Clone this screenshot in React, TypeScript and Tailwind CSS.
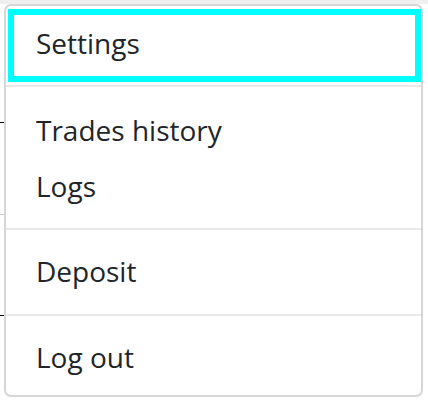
import React from "react";

const sections = [
  { items: ["Trades history", "Logs"], pad: "pt-[15px] pb-[14px]" },
  { items: ["Deposit"], pad: "pt-[13px] pb-[15px]" },
  { items: ["Log out"], pad: "pt-[13px] pb-[10px]" },
];

export default function App() {
  return (
    <div
      className="flex flex-col w-[428px] h-[402px] overflow-hidden bg-white text-[#212529]"
      style={{ fontFamily: '"Open Sans", "Noto Sans", sans-serif' }}
    >
      {/* strip of the page above the menu */}
      <div className="h-[4px] w-full shrink-0 bg-[#efefef]" />

      <div className="flex flex-row items-start">
        {/* edges of the page content peeking out left of the menu */}
        <div className="flex w-[4px] shrink-0 flex-col">
          <div className="h-[118px]" />
          <div className="h-[1px] bg-black" />
          <div className="h-[91px]" />
          <div className="h-[1px] bg-[#c8c8c8]" />
          <div className="h-[100px]" />
          <div className="h-[1px] bg-black" />
        </div>

        <div className="flex w-[419px] flex-col rounded-[7px] border-2 border-[#d6d6d6] bg-white">
          <div className="pt-[3px] pl-[2px]">
            <div className="h-[73px] border-[6px] border-[#00ffff] pl-[22px] pt-[7px] text-[28px] leading-[42px]">
              Settings
            </div>
          </div>

          <div className="mt-[3px] flex flex-col divide-y-2 divide-[#e9e9e9] border-t-2 border-[#e9e9e9]">
            {sections.map((s, i) => (
              <div key={i} className={`flex flex-col ${s.pad}`}>
                {s.items.map((label) => (
                  <div key={label} className="px-[30px] py-[7px] text-[28px] leading-[42px]">
                    {label}
                  </div>
                ))}
              </div>
            ))}
          </div>
        </div>
      </div>
    </div>
  );
}
